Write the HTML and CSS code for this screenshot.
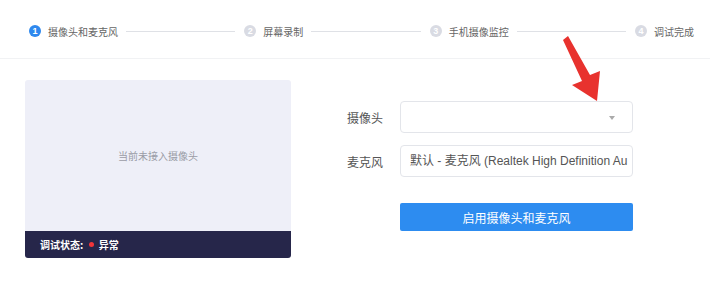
FILE: index.html
```html
<!DOCTYPE html>
<html>
<head>
	<meta charset="utf-8">
	<title>设备调试</title>
	<link rel="stylesheet" href="styles.css">
</head>
<body>
<div class="steps">
	<div class="step active"><span class="num">1</span><span class="txt">摄像头和麦克风</span></div>
	<div class="line"></div>
	<div class="step"><span class="num">2</span><span class="txt">屏幕录制</span></div>
	<div class="line"></div>
	<div class="step"><span class="num">3</span><span class="txt">手机摄像监控</span></div>
	<div class="line"></div>
	<div class="step"><span class="num">4</span><span class="txt">调试完成</span></div>
</div>
<div class="main">
	<div class="preview">
		<div class="video">当前未接入摄像头</div>
		<div class="status">调试状态: <span class="dot"></span> 异常</div>
	</div>
	<div class="form">
		<div class="row">
			<label>摄像头</label>
			<div class="field select"><span class="caret"></span></div>
		</div>
		<div class="row">
			<label>麦克风</label>
			<div class="field">默认 - 麦克风 (Realtek High Definition Au</div>
		</div>
		<button class="btn">启用摄像头和麦克风</button>
	</div>
</div>
<svg class="arrow" width="710" height="304" viewBox="0 0 710 304">
	<polygon points="563,40 568,36 590,75 600,71 597,101 572,85 582,81" fill="#e8322e"/>
</svg>
</body>
</html>
```

FILE: styles.css
```css
body {
	margin: 0;
	background: #fff;
	font-family: "Noto Sans CJK SC", "Liberation Sans", sans-serif;
	position: relative;
	height: 304px;
	overflow: hidden;
}
.steps {
	display: flex;
	align-items: flex-start;
	height: 33px;
	padding: 25px 16px 0 29px;
	border-bottom: 1px solid #f1f2f4;
}
.step {
	display: flex;
	align-items: center;
	height: 12px;
}
.num {
	width: 12px;
	height: 12px;
	border-radius: 50%;
	background: #d9dbe3;
	color: #fff;
	font-size: 9px;
	line-height: 12px;
	text-align: center;
	font-family: "Liberation Sans", sans-serif;
	font-weight: bold;
}
.step.active .num {
	background: #2e88ee;
}
.txt {
	margin-left: 7px;
	font-size: 10px;
	color: #666;
	white-space: nowrap;
}
.line {
	flex: 1;
	height: 1px;
	background: #dfe1e6;
	margin: 6px 9px 0 8px;
}
.main {
	display: flex;
	padding: 21px 0 0 25px;
}
.preview {
	width: 266px;
	height: 178px;
	border-radius: 3px;
	overflow: hidden;
	display: flex;
	flex-direction: column;
}
.video {
	flex: 1;
	background: #eeeff8;
	display: flex;
	align-items: center;
	justify-content: center;
	font-size: 10px;
	color: #9a9ca6;
}
.status {
	height: 27px;
	background: #26264a;
	color: #fff;
	font-size: 10px;
	font-weight: bold;
	display: flex;
	align-items: center;
	padding-left: 15px;
	white-space: pre;
}
.dot {
	display: inline-block;
	width: 5px;
	height: 5px;
	border-radius: 50%;
	background: #f0353a;
	margin: 0 3px 0 3px;
}
.form {
	margin-left: 56px;
	padding-top: 21px;
	display: flex;
	flex-direction: column;
	gap: 12px;
}
.row {
	display: flex;
	align-items: center;
}
.row label {
	width: 53px;
	font-size: 12px;
	color: #555;
}
.field {
	width: 233px;
	height: 32px;
	box-sizing: border-box;
	border: 1px solid #e3e5ea;
	border-radius: 4px;
	padding: 0 9px;
	font-family: "Liberation Sans", "Noto Sans CJK SC", sans-serif;
	font-size: 12px;
	line-height: 30px;
	color: #555;
	white-space: nowrap;
	overflow: hidden;
	position: relative;
}
.caret {
	position: absolute;
	right: 17px;
	top: 14px;
	border-left: 3px solid transparent;
	border-right: 3px solid transparent;
	border-top: 4px solid #aaa;
}
.btn {
	margin: 14px 0 0 53px;
	width: 233px;
	height: 28px;
	border: 0;
	border-radius: 2px;
	background: #2d8cf0;
	color: #fff;
	font-family: "Noto Sans CJK SC", sans-serif;
	font-size: 12px;
}
.arrow {
	position: absolute;
	left: 0;
	top: 0;
	pointer-events: none;
}
```
